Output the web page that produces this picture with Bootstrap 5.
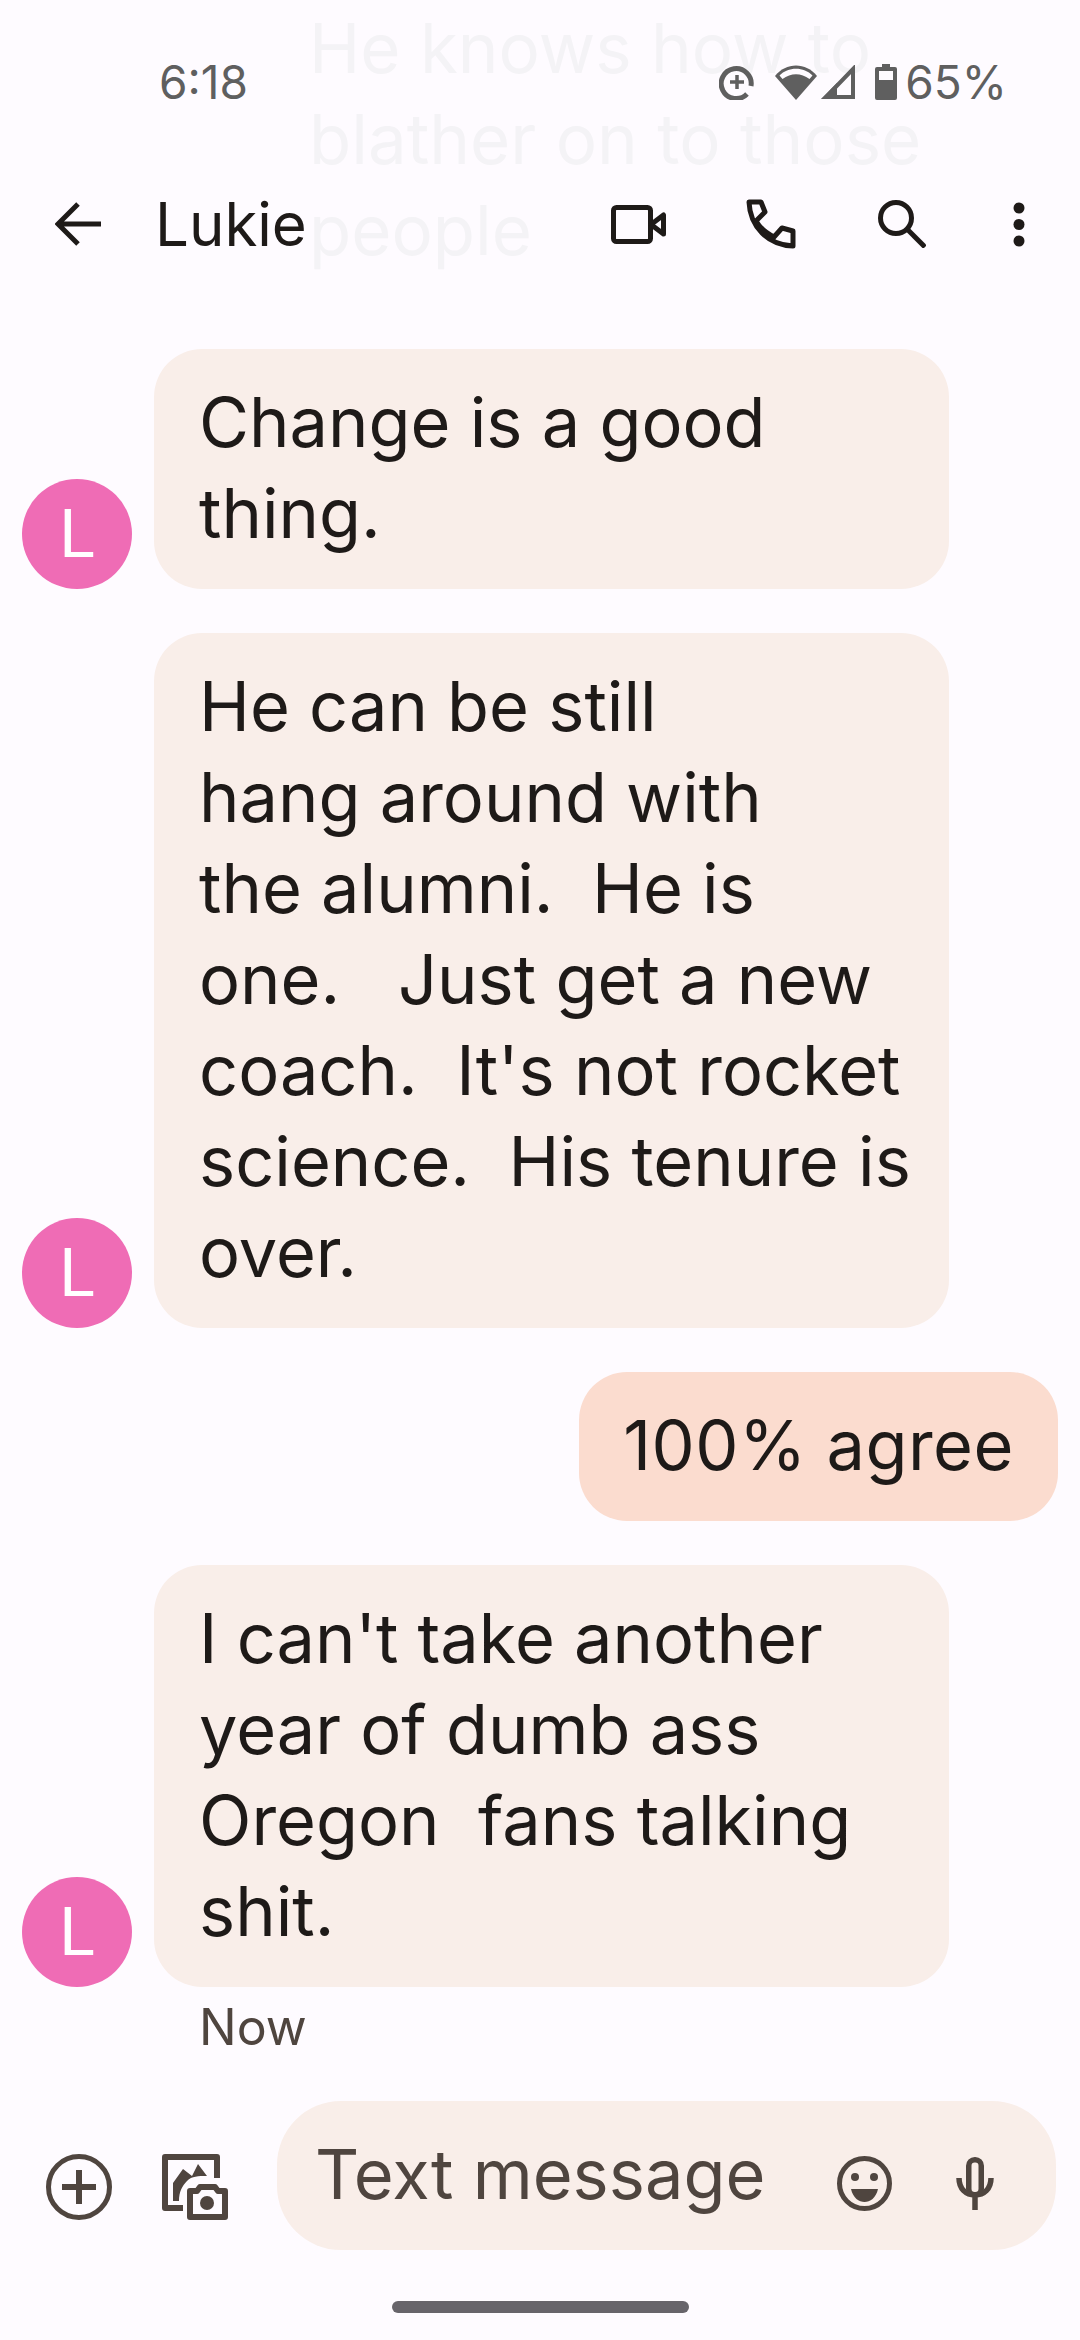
<!DOCTYPE html>
<html lang="en">
<head>
  <meta charset="UTF-8">
  <title>Lukie</title>
  <link href="https://cdn.jsdelivr.net/npm/bootstrap@5.3.3/dist/css/bootstrap.min.css" rel="stylesheet">
  <style>
    body {
      background-color: #fefbff;
      color: #1e1a18;
      font-family: "Inter", "Roboto", sans-serif;
      width: 1080px;
      height: 2340px;
      overflow: hidden;
    }
    .screen { height: 2340px; }
    .ghost-text {
      position: absolute;
      left: 309px;
      top: 3px;
      font-size: 69px;
      line-height: 91px;
      color: #f4f3f6;
    }
    .status-bar {
      height: 164px;
      padding: 58px 73px 0 159px;
      color: #5f5f5f;
      font-size: 46px;
      line-height: 48px;
      position: relative;
    }
    .status-icons svg { display: block; }
    .gap-wide { margin-left: 20px; }
    .gap-thin { margin-left: 4px; }
    .gap-text { margin-left: 8px; }
    .top-bar {
      height: 120px;
      padding: 0 55px;
      position: relative;
    }
    .top-title {
      font-size: 60px;
      line-height: 70px;
      margin-left: 54px;
    }
    .top-phone { margin-left: 80px; }
    .top-search { margin-left: 82px; }
    .top-dots { margin-left: 87px; }
    .thread { height: 1817px; padding-top: 65px; }
    .msg-gap { gap: 44px; }
    .person {
      width: 110px;
      height: 110px;
      background-color: #ef6cb5;
      color: #fff;
      font-family: "Roboto", sans-serif;
      font-size: 66px;
      font-weight: 400;
      margin-left: 22px;
      margin-right: 22px;
    }
    .bubble {
      font-size: 68.500px;
      line-height: 91px;
      padding: 28px 45px 30px;
      border-radius: 48px;
      white-space: nowrap;
    }
    .bubble-in { background-color: #f9eee9; width: 795px; }
    .bubble-out {
      background-color: #fbdccf;
      margin-right: 22px;
      padding-left: 44px;
      padding-right: 44px;
      letter-spacing: .5px;
    }
    .stamp {
      font-size: 50px;
      line-height: 56px;
      color: #4f453f;
      margin: 12px 0 0 199px;
    }
    .composer { height: 149px; padding: 0 24px 0 46px; }
    .composer-tool { margin-top: 22px; }
    .tool-gallery { margin-left: 50px; }
    .composer-field {
      margin-left: 49px;
      background-color: #f9eee9;
      border-radius: 64px;
      height: 149px;
      padding-left: 38px;
      padding-right: 62px;
      color: #4f453f;
      font-size: 68.500px;
    }
    .field-tool { margin-top: 16px; }
    .tool-mic { margin-left: 64px; }
    .home-bar {
      width: 297px;
      height: 12px;
      background-color: #67646a;
      margin-top: 51px;
    }
  </style>
</head>
<body>
  <div class="screen position-relative">
    <div class="ghost-text">He knows how to<br>blather on to those<br>people</div>

    <div class="status-bar d-flex justify-content-between align-items-start">
      <span>6:18</span>
      <div class="status-icons d-flex align-items-center">
        <svg width="36" height="36" viewBox="0 0 36 36" fill="none" stroke="#5f5f5f" stroke-width="5"><path d="M28 30A15 15 0 1 1 32 22"/><path d="M18 11v14M11 18h14" stroke-width="3.500"/></svg>
        <svg width="42" height="35" viewBox="0 0 42 35" class="gap-wide" fill="#5f5f5f"><path d="M0 11C11-3 31-3 42 11L21 35Z"/><path d="M4.500 10.500C13 1.500 29 1.500 37.500 10.500L34.500 14C26 7.500 16 7.500 7.500 14Z" fill="#fefbff"/></svg>
        <svg width="34" height="34" viewBox="0 0 34 34" class="gap-thin" fill="none" stroke="#5f5f5f" stroke-width="4"><path d="M32 4V32H5Z"/><path d="M0 34L16 18V34Z" fill="#5f5f5f" stroke="none"/></svg>
        <svg width="22" height="36" viewBox="0 0 22 36" class="gap-wide" fill="#5f5f5f"><path d="M7 0h8v3h5a2 2 0 0 1 2 2v29a2 2 0 0 1-2 2H2a2 2 0 0 1-2-2V5a2 2 0 0 1 2-2h5z"/><rect x="4" y="7" width="14" height="9" fill="#fefbff"/></svg>
        <span class="gap-text">65%</span>
      </div>
    </div>

    <div class="top-bar d-flex align-items-center">
      <svg width="46" height="44" viewBox="0 0 46 44" fill="none" stroke="#1e1a18" stroke-width="5"><path d="M46 22H4M23 2 3 22l20 20"/></svg>
      <span class="top-title">Lukie</span>
      <div class="d-flex align-items-center ms-auto">
        <svg width="55" height="39" viewBox="0 0 55 39" fill="none" stroke="#1e1a18" stroke-width="5"><rect x="2.500" y="2.500" width="37" height="34" rx="3"/><path d="M40 19.500 52.500 10V29Z" stroke-linejoin="round"/></svg>
        <svg width="50" height="50" viewBox="0 0 50 50" class="top-phone" fill="none" stroke="#1e1a18" stroke-width="5" stroke-linejoin="round"><path d="M3 3H15L19 13 10 22C14 29 20 34 28 38L36 29 47 32V47C22 46 4 28 3 3Z"/></svg>
        <svg width="48" height="48" viewBox="0 0 48 48" class="top-search" fill="none" stroke="#1e1a18" stroke-width="5"><circle cx="18" cy="18" r="15.500"/><path d="M29 29 47 47"/></svg>
        <svg width="12" height="45" viewBox="0 0 12 45" class="top-dots" fill="#1e1a18"><circle cx="6" cy="6" r="5.500"/><circle cx="6" cy="22.500" r="5.500"/><circle cx="6" cy="39" r="5.500"/></svg>
      </div>
    </div>

    <div class="thread">
      <div class="d-flex flex-column msg-gap">
        <div class="d-flex align-items-end">
          <div class="person rounded-circle d-flex align-items-center justify-content-center flex-shrink-0">L</div>
          <div class="bubble bubble-in">Change is a good<br>thing.</div>
        </div>
        <div class="d-flex align-items-end">
          <div class="person rounded-circle d-flex align-items-center justify-content-center flex-shrink-0">L</div>
          <div class="bubble bubble-in">He can be still<br>hang around with<br>the alumni.&nbsp; He is<br>one. &nbsp; Just get a new<br>coach.&nbsp; It's not rocket<br>science.&nbsp; His tenure is<br>over.</div>
        </div>
        <div class="d-flex justify-content-end">
          <div class="bubble bubble-out">100% agree</div>
        </div>
        <div class="d-flex align-items-end">
          <div class="person rounded-circle d-flex align-items-center justify-content-center flex-shrink-0">L</div>
          <div class="bubble bubble-in">I can't take another<br>year of dumb ass<br>Oregon&nbsp; fans talking<br>shit.</div>
        </div>
      </div>
      <div class="stamp">Now</div>
    </div>

    <div class="composer d-flex align-items-center">
      <svg width="66" height="66" viewBox="0 0 66 66" class="composer-tool flex-shrink-0" fill="none" stroke="#4f453f" stroke-width="5"><circle cx="33" cy="33" r="30.500"/><path d="M33 16V50M16 33H50" stroke-width="6"/></svg>
      <svg width="66" height="66" viewBox="0 0 66 66" class="composer-tool tool-gallery flex-shrink-0" fill="none" stroke="#4f453f" stroke-width="6" stroke-linejoin="round"><path d="M55 24V3H3V54H21"/><path d="M11 29 21 15 30 22 36 10 45 22C36 22 30 22 25 27 20 32 17 38 17 47H11Z" fill="#4f453f" stroke="none"/><path d="M28 37H35L38 33H53L56 37H63V63H28Z"/><circle cx="45" cy="49" r="7" fill="#4f453f" stroke="none"/></svg>
      <div class="composer-field d-flex align-items-center flex-grow-1">
        <span>Text message</span>
        <svg width="55" height="55" viewBox="0 0 55 55" class="field-tool ms-auto flex-shrink-0" fill="none" stroke="#4f453f" stroke-width="5"><circle cx="27.500" cy="27.500" r="25"/><circle cx="18" cy="21" r="4" fill="#4f453f" stroke="none"/><circle cx="37" cy="21" r="4" fill="#4f453f" stroke="none"/><path d="M14 33H41C39 42 33 46 27.500 46 22 46 16 42 14 33Z" fill="#4f453f" stroke="none"/></svg>
        <svg width="38" height="53" viewBox="0 0 38 53" class="field-tool tool-mic flex-shrink-0" fill="none" stroke="#4f453f" stroke-width="5.500"><rect x="12.750" y="2.750" width="12.500" height="35" rx="6"/><path d="M3 21C3 32 10 38 19 38 28 38 35 32 35 21M19 38V53"/></svg>
      </div>
    </div>
    <div class="home-bar rounded-pill mx-auto"></div>
  </div>
</body>
</html>
